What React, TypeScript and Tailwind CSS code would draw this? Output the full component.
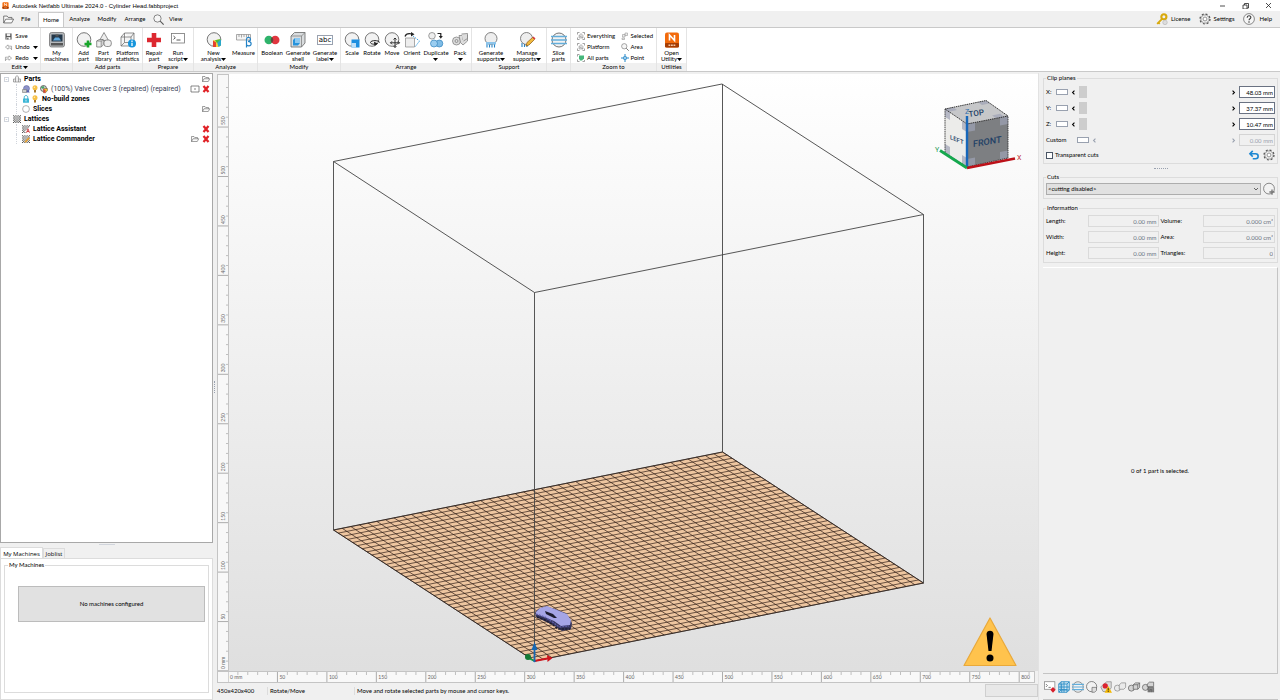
import type { ReactNode } from "react";

type IconProps = { name: string; className?: string };

const circle = <circle cx="8" cy="7.5" r="6.8" fill="#f2f2f2" stroke="#555" strokeWidth="0.8" />;

const glyphs: Record<string, ReactNode> = {
  app: (
    <>
      <rect x="1" y="0.5" width="14" height="15" rx="2" fill="#f26a0c" />
      <rect x="1" y="11" width="14" height="4.5" rx="1" fill="#a53d05" />
      <path d="M5.500 8.500V3L10.500 8.500V3" fill="none" stroke="#fff" strokeWidth="1.600" />
      <path d="M4.500 13.200h7" stroke="#f4c7a6" strokeWidth="1.400" strokeDasharray="1.800 0.700" />
    </>
  ),
  folder: (
    <path d="M1 13V3h5l1.500 2H13v2.500M1 13l3-5.500h11.500L12.500 13z" fill="#fafafa" stroke="#555" strokeWidth="1.100" />
  ),
  search: (
    <>
      <circle cx="6.500" cy="6.500" r="5.300" fill="#f6f6f6" stroke="#555" strokeWidth="1" />
      <path d="M10.500 10.500L15.500 15.500" stroke="#555" strokeWidth="1.600" />
    </>
  ),
  key: (
    <>
      <circle cx="10.500" cy="5" r="3.400" fill="none" stroke="#d8a90c" strokeWidth="2.800" />
      <path d="M8.500 7.500L1.500 14.500M3 12.500l2 2" stroke="#d8a90c" strokeWidth="2.400" />
      <circle cx="12" cy="12.500" r="3" fill="#ddd" stroke="#aaa" strokeWidth="0.700" />
    </>
  ),
  gear: (
    <>
      <circle cx="8" cy="8" r="6.600" fill="none" stroke="#555" strokeWidth="1.800" strokeDasharray="2.600 2.580" />
      <circle cx="8" cy="8" r="5.500" fill="#f0f0f0" stroke="#666" strokeWidth="0.800" />
      <circle cx="8" cy="8" r="2.600" fill="#fff" stroke="#666" strokeWidth="0.900" />
    </>
  ),
  help: (
    <>
      <circle cx="8" cy="8" r="7.200" fill="#f6f6f6" stroke="#555" strokeWidth="0.900" />
      <path d="M5.500 6.200c0-3.400 5-3.200 5-.4 0 1.900-2.500 1.900-2.500 4" fill="none" stroke="#333" strokeWidth="1.400" />
      <circle cx="8" cy="12" r="1" fill="#333" />
    </>
  ),
  save: (
    <>
      <path d="M1 1h14v14H1z" fill="#555" />
      <path d="M4 1h8v6H4z" fill="#eee" />
      <path d="M3.500 9.500h9V15h-9z" fill="#fff" />
      <path d="M5 11h3v4H5z" fill="#555" />
    </>
  ),
  undo: <path d="M7 2L1 7l6 5V9h5.500l2.500 4V5H7z" fill="#fff" stroke="#777" strokeWidth="1.300" />,
  redo: <path d="M9 2l6 5-6 5V9H3.500L1 13V5h8z" fill="#fff" stroke="#777" strokeWidth="1.300" />,
  machine: (
    <>
      <rect x="0.500" y="0.500" width="15" height="14.500" rx="2" fill="#b5b8bb" stroke="#666" strokeWidth="0.700" />
      <path d="M2.500 2.500h11v7h-11z" fill="#24384a" />
      <path d="M4 8.500l2-3h4l2 3z" fill="#60a8dd" />
      <path d="M6.500 2.500h3v2h-3zM2 11h12v2.500H2z" fill="#555" />
    </>
  ),
  addPart: (
    <>
      {circle}
      <path d="M12 8.500v7M8.500 12h7" stroke="#17a62a" strokeWidth="2.600" />
    </>
  ),
  library: (
    <g fill="#eee" stroke="#666" strokeWidth="0.700">
      <path d="M8 0.500L12.500 8.500H3.500z" />
      <path d="M0.700 9l2.500-1.500h4V13l-2 2H0.700z" />
      <path d="M0.700 9h4.500v6M5.200 9l2-1.500" />
      <rect x="8" y="8" width="7.300" height="6.500" rx="2.500" />
    </g>
  ),
  stats: (
    <>
      <path d="M1 5l3.500-4H14v9l-3 4H1zM1 5h10v9M11 5l3-4M4.500 1v9.500H14M4.500 10.500L1 14" fill="#f4f4f4" stroke="#666" strokeWidth="0.700" />
      <circle cx="12" cy="11.500" r="4" fill="#1695dc" />
      <path d="M12 8.500v1.500M12 10.800v3.200" stroke="#fff" strokeWidth="1.300" />
    </>
  ),
  repair: <path d="M8 1v14M1 8h14" stroke="#dc2830" strokeWidth="4.600" />,
  script: (
    <>
      <rect x="1.500" y="1.500" width="13" height="9.500" fill="#fff" stroke="#777" strokeWidth="0.800" />
      <path d="M3.500 4l1.800 1.700-1.800 1.700M6.500 8h4" fill="none" stroke="#444" strokeWidth="0.900" />
    </>
  ),
  analysis: (
    <>
      {circle}
      <path d="M7 15V8.500L15 7v6.500L12.500 15z" fill="#f4d13a" />
      <path d="M7 15V8.500l3 2v4.500z" fill="#e5412d" />
      <path d="M15 7v6.500L12.500 15 11 10z" fill="#2aa7c9" />
      <path d="M9 8.200L15 7l-4 4z" fill="#4abb3c" />
    </>
  ),
  measure: (
    <>
      <path d="M0.500 2.500h14v5.500H0.500zM3 2.500V5M5.500 2.500v3M8 2.500V5M10.500 2.500v3M12.500 2.500V5" fill="#f4f4f4" stroke="#888" strokeWidth="0.700" />
      <path d="M10.500 15.500V7.500c0-3 4-2.500 4-.2 0 1.500-1.500 2-2.500 2 4 0 4 4.500 1 4.500-1 0-2-.5-2.500-1" fill="none" stroke="#2583c6" strokeWidth="1.200" />
    </>
  ),
  boolean: (
    <>
      <circle cx="4.800" cy="8" r="4.300" fill="#2fb36b" />
      <circle cx="11.200" cy="8" r="4.300" fill="#e0363f" />
      <path d="M8 5.100a4.300 4.300 0 0 1 0 5.800 4.300 4.300 0 0 1 0-5.800z" fill="#5b4a3a" />
    </>
  ),
  shell: (
    <>
      <path d="M1 4l3.500-3.500H15v10.500L11.500 15H1z" fill="#d9dcde" stroke="#666" strokeWidth="0.800" />
      <path d="M1 4h10.500v11M11.500 4L15 .5" fill="none" stroke="#777" strokeWidth="0.700" />
      <path d="M3 13.500V8l2-2h5v5l-2 2.500z" fill="#2793dc" />
      <path d="M5 6h5v5H5z" fill="#8cc8f0" />
    </>
  ),
  rotate: (
    <>
      {circle}
      <path d="M15.500 10.500c0-2.500-9-2.500-9 0 0 1.500 3 2 6 1.500" fill="none" stroke="#222" strokeWidth="1" />
      <path d="M10 9.800l4 1.700-3.500 2.500z" fill="#222" />
    </>
  ),
  scale: (
    <>
      {circle}
      <path d="M7.500 7.500h8v8h-8z" fill="#1d8fe0" />
      <path d="M7.500 11h4.500v4.500H7.500z" fill="#bfe0f8" />
    </>
  ),
  move: (
    <>
      {circle}
      <path d="M11 6v9.500M6.500 10.800h9M9.500 7.500L11 6l1.500 1.500M9.500 14l1.500 1.500 1.500-1.500M8 9.300l-1.500 1.500L8 12.300M14 9.300l1.500 1.500-1.500 1.500" fill="none" stroke="#222" strokeWidth="0.900" />
    </>
  ),
  orient: (
    <>
      <path d="M1.500 6h9v9h-9z" fill="#eee" stroke="#888" strokeWidth="0.700" />
      <path d="M9 4l6.500 5L11 15" fill="none" stroke="#2a95dd" strokeWidth="0.900" strokeDasharray="1.500 1" />
      <path d="M1 4.500C2 1.500 5 1.300 8 2" fill="none" stroke="#222" strokeWidth="1.200" />
      <path d="M7 0l3.500 2.300L7 4.500z" fill="#222" />
    </>
  ),
  duplicate: (
    <>
      <circle cx="4" cy="3.800" r="3.300" fill="#eee" stroke="#777" strokeWidth="0.700" />
      <circle cx="11.300" cy="11.500" r="3.500" fill="#7fbce6" stroke="#2f82bd" strokeWidth="0.700" />
      <circle cx="6" cy="11.500" r="3.500" fill="#9acdf0" stroke="#2f82bd" strokeWidth="0.700" />
      <path d="M9.500 1.500h3.300v3" fill="none" stroke="#222" strokeWidth="1.200" />
      <path d="M10.800 4h4l-2 2.800z" fill="#222" />
    </>
  ),
  pack: (
    <g fill="#ddd" stroke="#777" strokeWidth="0.700">
      <circle cx="4.500" cy="9" r="4" />
      <circle cx="4.500" cy="9" r="1.500" />
      <path d="M7 3.500h4v4l4.500-4.500v6L11 13l-2.500-2.500z" />
      <path d="M9.500 2l6-.5v5l-4 2.500" />
    </g>
  ),
  supports: (
    <>
      <path d="M4 12v3.500M6.500 12v3.500M9 12v3.500M11.500 12v3.500" stroke="#2583c6" strokeWidth="1.100" />
      <circle cx="8" cy="6.500" r="6" fill="#eee" stroke="#666" strokeWidth="0.800" />
      <path d="M3 10h10v2.500H3z" fill="#8cc4ea" />
    </>
  ),
  manage: (
    <>
      <path d="M3 11v4M5.500 11v4M8 12v3" stroke="#2583c6" strokeWidth="1.100" />
      <circle cx="7.500" cy="6.500" r="6" fill="#eee" stroke="#666" strokeWidth="0.800" />
      <path d="M7 14l1-3.500 5.500-5 2 2-5.500 5.500z" fill="#f1b83c" stroke="#8a5a17" strokeWidth="0.700" />
      <path d="M13.500 5.500l1-1 2 2-1 1z" fill="#e0363f" />
    </>
  ),
  slice: (
    <>
      <circle cx="8" cy="8" r="7" fill="#f2f2f2" stroke="#555" strokeWidth="0.800" />
      <path d="M0 4.500h16M0 8h16M0 11.500h16" stroke="#63aedb" strokeWidth="1.500" />
    </>
  ),
  everything: (
    <>
      <path d="M1 5V1h4M11 1h4v4M15 11v4h-4M5 15H1v-4" fill="none" stroke="#666" strokeWidth="1.200" />
      <path d="M4 7l4-4 4 4v5H4zM4 7l8 5" fill="#ddd" stroke="#888" strokeWidth="1" />
    </>
  ),
  allParts: (
    <>
      <path d="M1 5V1h4M1 11v4h4M11 15h4v-3" fill="none" stroke="#666" strokeWidth="1.200" />
      <path d="M4 3h10v6l-4 4H6l-2-4z" fill="#46b77c" />
    </>
  ),
  selected: <path d="M3 5h5v5H3zM8 2h5v5H8zM2 12h5v3H2z" fill="#eee" stroke="#999" strokeWidth="1.200" />,
  point: <path d="M8 0v5M8 11v5M0 8h5M11 8h5M5.500 5.500h5v5h-5z" fill="#fff" stroke="#2387c9" strokeWidth="2" />,
  part: <path d="M1 14V8h4V4l3-3 3 3v4h4v6zM5 8v6M11 8v6" fill="#eee" stroke="#777" strokeWidth="1.200" />,
  globePart: (
    <>
      <circle cx="9" cy="7" r="6" fill="#8d92c9" stroke="#555a90" strokeWidth="1" />
      <path d="M1 9h8v6H1z" fill="#ccc" stroke="#666" strokeWidth="1" />
      <path d="M12 9l3.500 6h-7z" fill="#555fae" />
    </>
  ),
  bulb: (
    <>
      <circle cx="8" cy="5.500" r="5" fill="#f7c044" />
      <path d="M6 10h4v5H6z" fill="#a97a2a" />
      <circle cx="6.800" cy="4.500" r="1.600" fill="#fdeab5" />
    </>
  ),
  meshPart: (
    <>
      <circle cx="7" cy="7" r="6" fill="#ddd" stroke="#333" strokeWidth="1.400" />
      <path d="M7 7h8v4l-4 4.500H7z" fill="#f2bd30" stroke="#333" strokeWidth="0.800" />
      <path d="M7 7l4 4v4.500H7z" fill="#d8443d" />
      <path d="M2 4l5-2 2 3-5 3z" fill="#44a564" />
    </>
  ),
  lock: (
    <>
      <path d="M4.500 8V4.500c0-4.500 7-4.500 7 0V8" fill="none" stroke="#2aa3c4" strokeWidth="1.800" />
      <rect x="2" y="7" width="12" height="8.500" rx="1" fill="#3bb6d6" />
      <path d="M8 9.500v3.500" stroke="#fff" strokeWidth="1.600" />
    </>
  ),
  ring: <circle cx="8" cy="8" r="6.800" fill="#fff" stroke="#888" strokeWidth="1.300" />,
  lattice: (
    <g stroke="#555" strokeWidth="2.200" strokeDasharray="2.300 2.300">
      <path d="M0 1.500h16M0 6h16M0 10.500h16M0 15h16" />
      <path d="M2.300 3.700h13.500M2.300 8.200h13.500M2.300 12.700h13.500" />
    </g>
  ),
  latticeA: (
    <>
      <g stroke="#555" strokeWidth="2.200" strokeDasharray="2.300 2.300">
        <path d="M0 1.500h16M0 6h13M0 10.500h7M0 15h7" />
        <path d="M2.300 3.700h13.500M2.300 8.200h7M2.300 12.700h4" />
      </g>
      <path d="M9 15.500l3-8 3 8M10 13h4" fill="none" stroke="#c8262d" strokeWidth="1.600" />
    </>
  ),
  latticeC: (
    <>
      <g stroke="#555" strokeWidth="2.200" strokeDasharray="2.300 2.300">
        <path d="M0 1.500h16M0 6h16M0 10.500h16M0 15h16" />
        <path d="M2.300 3.700h13.500M2.300 8.200h13.500M2.300 12.700h13.500" />
      </g>
      <path d="M5 13.500l8-9 2.500 2-8 9z" fill="#e8a12c" />
    </>
  ),
  remove: <path d="M3 2l10 12M13 2L3 14" stroke="#e02227" strokeWidth="4.500" />,
  screen: (
    <>
      <path d="M0 2h16v12H0z" fill="#fff" stroke="#555" strokeWidth="1.400" />
      <path d="M8 6v4" stroke="#555" strokeWidth="1.500" />
    </>
  ),
  back: <path d="M6 1.500L1.500 6 6 10.500M2 6h8.500c5.500 0 5.500 8 0 8H6" fill="none" stroke="#1e88d2" strokeWidth="2.600" />,
  addCut: (
    <>
      <circle cx="8" cy="7.500" r="7.200" fill="#f2f2f2" stroke="#555" strokeWidth="0.900" />
      <path d="M12 8.500v7M8.500 12h7" stroke="#777" strokeWidth="1.800" />
    </>
  ),
  scriptStop: (
    <>
      <rect x="0.500" y="1" width="14" height="10" fill="#fff" stroke="#777" strokeWidth="0.900" />
      <path d="M2.500 4l2 2-2 2M6 8.500h3" fill="none" stroke="#444" strokeWidth="0.900" />
      <path d="M12 8l3.500 3.800L12 15.500l-3.500-3.700z" fill="#d61f2c" />
    </>
  ),
  grid: (
    <path d="M1 4l3-3h11v11l-3 3H1zM1 4h11v11M4 1v11h11M12 4l3-3M1 8h14M8 1v14M4 12l-3 3M1 11.500h11M5 4v11" fill="#d7ecf8" stroke="#2b8cc4" strokeWidth="1.200" />
  ),
  roundPart: (
    <>
      <circle cx="7.500" cy="7.500" r="6.800" fill="#f2f2f2" stroke="#555" strokeWidth="0.900" />
      <path d="M8 8.500h6v4l-2.500 2.500H8z" fill="#ddd" stroke="#555" strokeWidth="0.800" />
    </>
  ),
  warnPart: (
    <>
      <path d="M1 8l4-4 4-3h6v8l-4 5H4z" fill="#ddd" stroke="#777" strokeWidth="0.800" />
      <circle cx="7" cy="6.500" r="3.500" fill="#dc2430" />
      <path d="M11 6.500l5 9H6z" fill="#f5b800" />
      <path d="M11 9.500v3M11 13.200v1.300" stroke="#222" strokeWidth="1.200" />
    </>
  ),
  pair: (
    <g fill="#eaeaea" stroke="#777" strokeWidth="0.800">
      <circle cx="4.500" cy="9.500" r="4" />
      <path d="M7 5l3-2.500h5.500v6L13 11H7z" />
    </g>
  ),
  pairDark: (
    <g fill="#d4d4d4" stroke="#555" strokeWidth="0.900">
      <circle cx="4.500" cy="9.500" r="4" />
      <path d="M7 5l3-2.500h5.500v6L13 11H7zM7 5h6v6M13 5l2.500-2.500" />
    </g>
  ),
  pairMachine: (
    <g fill="#d4d4d4" stroke="#555" strokeWidth="0.900">
      <circle cx="4.500" cy="8.500" r="4" />
      <path d="M7 4l3-2.500h5.500v6H7z" />
      <path d="M8 15V8.500h7.500V15M10.500 15v-3.500H13V15" fill="#888" />
    </g>
  ),
  less: <path d="M11 2L5 8l6 6" fill="none" stroke="currentColor" strokeWidth="3.500" />,
  greater: <path d="M5 2l6 6-6 6" fill="none" stroke="currentColor" strokeWidth="3.500" />,
};

function Icon({ name, className = "size-4" }: IconProps) {
  return (
    <svg viewBox="0 0 16 16" className={`shrink-0 overflow-visible ${className}`} aria-hidden="true">
      {glyphs[name]}
    </svg>
  );
}

function Caret() {
  return (
    <svg viewBox="0 0 5 3" className="inline-block h-[3px] w-[5px] align-middle" aria-hidden="true">
      <path d="M0 0h5L2.500 3z" />
    </svg>
  );
}

type Tool = { icon: string; lines: string[]; width: string; menu?: "inline" | "below" };

const ribbon: { title: string; width: string; tools: Tool[] }[] = [
  { title: "", width: "w-8", tools: [{ icon: "machine", lines: ["My", "machines"], width: "w-7" }] },
  {
    title: "Add parts",
    width: "w-[70px]",
    tools: [
      { icon: "addPart", lines: ["Add", "part"], width: "w-5" },
      { icon: "library", lines: ["Part", "library"], width: "w-5" },
      { icon: "stats", lines: ["Platform", "statistics"], width: "w-7" },
    ],
  },
  {
    title: "Prepare",
    width: "w-[51px]",
    tools: [
      { icon: "repair", lines: ["Repair", "part"], width: "w-5" },
      { icon: "script", lines: ["Run", "script"], width: "w-7", menu: "inline" },
    ],
  },
  {
    title: "Analyze",
    width: "w-16",
    tools: [
      { icon: "analysis", lines: ["New", "analysis"], width: "w-9", menu: "inline" },
      { icon: "measure", lines: ["Measure"], width: "w-6" },
    ],
  },
  {
    title: "Modify",
    width: "w-[83px]",
    tools: [
      { icon: "boolean", lines: ["Boolean"], width: "w-[26px]" },
      { icon: "shell", lines: ["Generate", "shell"], width: "w-[26px]" },
      { icon: "abc", lines: ["Generate", "label"], width: "w-7", menu: "inline" },
    ],
  },
  {
    title: "Arrange",
    width: "w-[131px]",
    tools: [
      { icon: "scale", lines: ["Scale"], width: "w-5" },
      { icon: "rotate", lines: ["Rotate"], width: "w-5" },
      { icon: "move", lines: ["Move"], width: "w-5" },
      { icon: "orient", lines: ["Orient"], width: "w-5" },
      { icon: "duplicate", lines: ["Duplicate"], width: "w-7", menu: "below" },
      { icon: "pack", lines: ["Pack"], width: "w-5", menu: "below" },
    ],
  },
  {
    title: "Support",
    width: "w-[75px]",
    tools: [
      { icon: "supports", lines: ["Generate", "supports"], width: "w-9", menu: "inline" },
      { icon: "manage", lines: ["Manage", "supports"], width: "w-9", menu: "inline" },
    ],
  },
  { title: "", width: "w-6", tools: [{ icon: "slice", lines: ["Slice", "parts"], width: "w-5" }] },
];

function ToolButton({ tool }: { tool: Tool }) {
  return (
    <button type="button" className={`flex flex-col items-center ${tool.width}`}>
      {tool.icon === "abc" ? (
        <span className="my-[3px] flex h-[10px] w-4 items-center justify-center border border-gray-400 font-['DejaVu_Sans'] text-[7px] leading-none">
          abc
        </span>
      ) : (
        <Icon name={tool.icon} />
      )}
      <span className="mt-[2px] whitespace-nowrap text-center leading-[6px]">
        {tool.lines.map((line, i) => (
          <span key={line} className="block">
            {line}
            {tool.menu === "inline" && i === tool.lines.length - 1 && <Caret />}
          </span>
        ))}
        {tool.menu === "below" && (
          <span className="block">
            <Caret />
          </span>
        )}
      </span>
    </button>
  );
}

function RibbonGroup({ title, width, children }: { title: ReactNode; width: string; children: ReactNode }) {
  return (
    <div className={`flex shrink-0 flex-col border-r border-[#e4e4e4] ${width}`}>
      <div className="flex flex-1 justify-center pt-1">{children}</div>
      <div className="flex h-2 items-center justify-center whitespace-nowrap bg-[#f0f0f0]">{title}</div>
    </div>
  );
}

function Ribbon() {
  return (
    <div className="flex h-[45px] shrink-0 border-y border-[#c9c9c9] bg-white">
      <RibbonGroup width="w-[41px]" title={<button type="button">Edit <Caret /></button>}>
        <div className="flex flex-1 flex-col gap-[3px] pl-[7px]">
          {["Save", "Undo", "Redo"].map((label) => (
            <button key={label} type="button" className="flex h-2 items-center gap-[3px]">
              <Icon name={label.toLowerCase()} className="size-[7px]" />
              {label}
              {label !== "Save" && (
                <span className="ml-auto mr-1 flex">
                  <Caret />
                </span>
              )}
            </button>
          ))}
        </div>
      </RibbonGroup>
      {ribbon.map((group, i) => (
        <RibbonGroup key={i} width={group.width} title={group.title}>
          {group.tools.map((tool) => (
            <ToolButton key={tool.icon} tool={tool} />
          ))}
        </RibbonGroup>
      ))}
      <RibbonGroup width="w-[86px]" title="Zoom to">
        <div className="grid flex-1 grid-cols-2 content-start gap-y-[3px] pl-[6px]">
          {[
            ["everything", "Everything"],
            ["selected", "Selected"],
            ["everything", "Platform"],
            ["search", "Area"],
            ["allParts", "All parts"],
            ["point", "Point"],
          ].map(([icon, label]) => (
            <button key={label} type="button" className="flex h-2 items-center gap-[2px] even:pl-1">
              <Icon name={icon} className="size-2" />
              {label}
            </button>
          ))}
        </div>
      </RibbonGroup>
      <RibbonGroup width="w-[30px]" title="Utilities">
        <ToolButton tool={{ icon: "app", lines: ["Open", "Utility"], width: "w-7", menu: "inline" }} />
      </RibbonGroup>
    </div>
  );
}

function TitleBar() {
  return (
    <header className="flex h-[11px] shrink-0 items-center bg-white pl-[2px] pr-2">
      <Icon name="app" className="size-[7px]" />
      <h1 className="ml-[3px] font-['Liberation_Sans',sans-serif] text-[6px]">
        Autodesk Netfabb Ultimate 2024.0 - Cylinder Head.fabbproject
      </h1>
      <div className="ml-auto flex gap-4">
        {[
          ["Minimize", "M1 4h5"],
          ["Restore", "M1 3h4v4H1zM2.500 3V1.500h4V6H5"],
          ["Close", "M1 1l5 5M6 1L1 6"],
        ].map(([label, d]) => (
          <button key={label} type="button" aria-label={label}>
            <svg viewBox="0 0 7 7" className="size-[7px]">
              <path d={d} fill="none" stroke="#222" strokeWidth="0.800" />
            </svg>
          </button>
        ))}
      </div>
    </header>
  );
}

function TabBar() {
  return (
    <nav className="flex h-4 shrink-0 items-center bg-[#f0f0f0] pl-[3px] pr-2">
      <button type="button" aria-label="Open project">
        <Icon name="folder" className="size-[11px]" />
      </button>
      <button type="button" className="ml-[7px] w-[17px] text-left">File</button>
      <button type="button" className="-mb-px flex h-full w-[26px] items-center justify-center border border-b-0 border-[#c9c9c9] bg-white">
        Home
      </button>
      <button type="button" className="w-[31px]">Analyze</button>
      <button type="button" className="w-6">Modify</button>
      <button type="button" className="w-8">Arrange</button>
      <button type="button" aria-label="Search" className="ml-[2px]">
        <Icon name="search" className="size-[11px]" />
      </button>
      <button type="button" className="ml-[5px]">View</button>
      <div className="ml-auto flex items-center">
        <button type="button" className="flex items-center gap-[3px]">
          <Icon name="key" className="size-3" />
          License
        </button>
        <button type="button" className="ml-2 flex items-center gap-[3px]">
          <Icon name="gear" className="size-3" />
          Settings
        </button>
        <button type="button" className="ml-2 flex items-center gap-[5px]">
          <Icon name="help" className="size-3" />
          Help
        </button>
      </div>
    </nav>
  );
}

type Row = { depth: number; icons: string[]; label: string; plain?: boolean; actions?: string[] };

const rows: Row[] = [
  { depth: 0, icons: ["part"], label: "Parts", actions: ["folder"] },
  {
    depth: 1,
    icons: ["globePart", "bulb", "meshPart"],
    label: "(100%) Valve Cover 3 (repaired) (repaired)",
    plain: true,
    actions: ["screen", "remove"],
  },
  { depth: 1, icons: ["lock", "bulb"], label: "No-build zones" },
  { depth: 1, icons: ["ring"], label: "Slices", actions: ["folder"] },
  { depth: 0, icons: ["lattice"], label: "Lattices" },
  { depth: 1, icons: ["latticeA"], label: "Lattice Assistant", actions: ["remove"] },
  { depth: 1, icons: ["latticeC"], label: "Lattice Commander", actions: ["folder", "remove"] },
];

function PartTree() {
  return (
    <ul className="flex-1 border border-[#a8a8a8] bg-white font-[Roboto,sans-serif] text-[7px]">
      {rows.map((row) => (
        <li key={row.label} className="flex h-[10px] items-center pl-[3px] pr-[2px]">
          {row.depth === 0 ? (
            <span className="mr-1 flex size-[5px] items-center justify-center border border-gray-300 text-[5px] leading-none text-gray-500">
              -
            </span>
          ) : (
            <span className="ml-3 mr-[2px] h-full w-1 border-l border-dotted border-gray-300" />
          )}
          <span className="flex gap-px">
            {row.icons.map((icon) => (
              <Icon key={icon} name={icon} className="size-2" />
            ))}
          </span>
          <span className={`ml-[3px] whitespace-nowrap ${row.plain ? "text-gray-700" : "font-bold"}`}>{row.label}</span>
          <span className="ml-auto flex gap-[3px]">
            {row.actions?.map((icon) => (
              <button key={icon} type="button" aria-label={`${icon} ${row.label}`}>
                <Icon name={icon} className="size-2" />
              </button>
            ))}
          </span>
        </li>
      ))}
    </ul>
  );
}

function Sidebar() {
  return (
    <aside className="flex w-[213px] shrink-0 flex-col">
      <PartTree />
      <div className="mx-auto my-px h-px w-4 bg-gray-300" />
      <div className="flex h-3 items-end font-['Open_Sans','Noto_Sans',sans-serif]">
        <button type="button" className="-mb-px h-3 w-[43px] border border-b-0 border-[#dcdcdc] bg-white">
          My Machines
        </button>
        <button type="button" className="h-[10px] w-[22px] border border-b-0 border-[#dcdcdc]">
          Joblist
        </button>
      </div>
      <div className="h-[142px] border border-[#dcdcdc] bg-white px-[3px] pb-[6px] pt-[2px]">
        <fieldset className="h-full border border-[#dcdcdc] px-[3px]">
          <legend className="px-px leading-[8px]">My Machines</legend>
          <button
            type="button"
            className="ml-[10px] mt-[17px] block h-9 w-[187px] border border-[#bcbcbc] bg-[#e1e1e1]"
          >
            No machines configured
          </button>
        </fieldset>
      </div>
    </aside>
  );
}

// ruler scale: 50 mm per major division, 49.45px apart
const MAJOR = 49.45;
const divisions = Array.from({ length: 17 }, (_, i) => i);

function VerticalRuler() {
  return (
    <svg className="h-full w-3 shrink-0 border border-[#c4c4c4] bg-[#f8f8f8]">
      <svg y="100%" overflow="visible">
        {divisions.slice(0, 12).map((n) => (
          <g key={n} stroke="#b0b0b0" strokeWidth="0.800" transform={`translate(0 ${1 - n * MAJOR})`}>
            <path d="M0 0h11" stroke="#999" />
            {[1, 2, 3, 4].map((k) => (
              <path key={k} d={`M8 ${(-k * MAJOR) / 5}h3`} />
            ))}
            <text transform="translate(7 -2) rotate(-90)" fontSize="5" fill="#666" stroke="none">
              {n === 0 ? "0 mm" : n * 50}
            </text>
          </g>
        ))}
      </svg>
    </svg>
  );
}

function HorizontalRuler() {
  return (
    <div className="mr-[3px] flex h-3 shrink-0 border border-[#c4c4c4] bg-[#f8f8f8]">
      <svg className="ml-[10px] h-full w-full">
        {divisions.map((n) => (
          <g key={n} stroke="#b0b0b0" strokeWidth="0.800" transform={`translate(${n * MAJOR} 0)`}>
            <path d="M0 0v11" stroke="#999" />
            {[1, 2, 3, 4].map((k) => (
              <path key={k} d={`M${(k * MAJOR) / 5} 0v3`} />
            ))}
            <text x="2" y="7" fontSize="5" fill="#666" stroke="none">
              {n === 0 ? "0 mm" : n * 50}
            </text>
          </g>
        ))}
      </svg>
    </div>
  );
}

const COLS = 45;
const ROWS = 42;

function BuildPlate() {
  // plate corners: front (534.5,661), right (923.5,583), left (333.5,530)
  const along = Array.from({ length: COLS + 1 }, (_, i) => {
    const t = i / COLS;
    return `M${534.5 + 389 * t} ${661 - 78 * t}l-201 -131`;
  });
  const across = Array.from({ length: ROWS + 1 }, (_, i) => {
    const t = i / ROWS;
    return `M${534.5 - 201 * t} ${661 - 131 * t}l389 -78`;
  });
  return (
    <svg viewBox="229 74 809 597" className="absolute inset-0 h-full w-full" role="img" aria-label="Build volume">
      <g fill="none" stroke="#444" strokeWidth="0.900">
        <path d="M333.500 161.500L722 84L923.500 214.500M722.500 84V452.500" />
        <path d="M534.500 661L923.500 583L722.500 452L333.500 530z" fill="#eec6a0" />
        <path d={along.join("")} stroke="#2e1c16" strokeWidth="0.700" />
        <path d={across.join("")} stroke="#2e1c16" strokeWidth="0.700" />
        <path d="M333.500 161.500L534.500 292.500L923.500 214.500V583M333.500 161.500V530M534.500 292.500V661" />
      </g>
      <g>
        <path d="M535 613l3-4 8-3 20 7 6 10-1 6-9 2-7-5-19-9z" fill="#35355c" />
        <path d="M536 612l4-4 7-2 20 8 4 6-1 5-9 1-7-5-18-7z" fill="#a5a5e6" />
        <path d="M545 611l8 3 4 4-3 0-8-4z" fill="#1d1d30" />
        <path d="M536 614l9 3 9 6 5 4 10-1" fill="none" stroke="#5e5ea8" strokeWidth="1.300" strokeDasharray="2 1" />
        <path d="M537 617l8 3 8 5 5 4h12" fill="none" stroke="#1d1d30" strokeWidth="1.500" strokeDasharray="2.500 1" />
      </g>
      <path d="M534.500 661v-14" stroke="#1668b4" strokeWidth="1.800" />
      <path d="M531.500 650l3-8 3 8z" fill="#1668b4" />
      <path d="M534.500 661l13-2.500" stroke="#d0141c" strokeWidth="1.800" />
      <path d="M547 655l5.500 3-5 4z" fill="#d0141c" />
      <path d="M534.500 661l-6-3" stroke="#1e9c47" strokeWidth="1.800" />
      <circle cx="528" cy="657" r="3" fill="#137a34" />
      <circle cx="534.500" cy="661" r="1.200" fill="#1668b4" />
    </svg>
  );
}

function ViewCube() {
  return (
    <svg viewBox="932 96 92 76" className="absolute right-[14px] top-[22px] h-[76px] w-[92px]" role="img" aria-label="View cube">
      <path d="M945 109L986 100.500L1008 116L967 124z" fill="#c6c7c9" />
      <path d="M945 109L967 124V167L945 153z" fill="#ececea" />
      <path d="M967 124L1008 116V158L967 167z" fill="#7d7f82" />
      <g fill="#9fa3b6" opacity="0.700">
        <path d="M945 109l5 3v8l-5-3zM962 121l5 3v8l-5-3zM945 144l5 3v9l-5-3zM962 155l5 3v9l-5-3z" />
        <path d="M967 124l8-1.500v8l-8 1.500zM1000 117.500l8-1.500v8l-8 1.500zM967 159l8-1.500v8l-8 1.500zM1000 152l8-1.500v8l-8 1.500z" />
        <path d="M945 109l8-1.700 4 2.700-8 1.700zM978 102.200l8-1.700 4 2.700-8 1.700zM996 118.200l8-1.700-4-2.800-8 1.700z" />
      </g>
      <path d="M945 109L986 100.500L1008 116L967 124z" fill="none" stroke="#222" strokeWidth="0.900" strokeDasharray="1.500 0.700" />
      <path d="M945 109V153L967 167L1008 158V116" fill="none" stroke="#333" strokeWidth="0.900" strokeDasharray="1.500 0.700" />
      <g fill="#1f3f66" fontFamily="Roboto, sans-serif" fontWeight="500">
        <text transform="translate(973 147) skewY(-9)" fontSize="9">FRONT</text>
        <text transform="translate(950 139) skewY(22)" fontSize="6">LEFT</text>
        <text transform="translate(969 117) rotate(-8)" fontSize="8">TOP</text>
      </g>
      <path d="M967 167V116" stroke="#1767ba" strokeWidth="2.400" />
      <path d="M967 168L940 150.500" stroke="#15a84e" strokeWidth="2.800" />
      <path d="M967 168L1015 158.500" stroke="#bc1119" strokeWidth="2.800" />
      <g fontFamily="Roboto, sans-serif" fontSize="7">
        <text x="1017" y="160" fill="#c0282e">X</text>
        <text x="935" y="152" fill="#279a55">Y</text>
        <text x="965" y="114" fill="#2c6cad">Z</text>
      </g>
    </svg>
  );
}

function Viewport() {
  return (
    <main className="flex min-w-0 flex-1 flex-col pt-px">
      <div className="flex min-h-0 flex-1">
        <VerticalRuler />
        <div className="relative min-w-0 flex-1 bg-linear-to-b from-white to-[#dfdfdf]">
          <BuildPlate />
          <ViewCube />
          <svg viewBox="0 0 54 50" className="absolute bottom-1 right-[21px] h-[50px] w-[54px]" role="img" aria-label="Warning">
            <path d="M27 1L53 48.500H1z" fill="#ffc34d" stroke="#e9a93a" strokeWidth="1.200" strokeLinejoin="round" />
            <path d="M23.500 17c0-4.500 7-4.500 7 0l-2 17h-3z" fill="#000" />
            <circle cx="27" cy="41" r="3.500" fill="#000" />
          </svg>
        </div>
      </div>
      <HorizontalRuler />
      <footer className="flex h-[17px] shrink-0 items-center pb-[2px]">
        <span className="w-[50px]">450x420x400</span>
        <span className="w-[87px] border-l border-[#dcdcdc] pl-[2px]">Rotate/Move</span>
        <span className="flex-1 border-l border-[#dcdcdc] pl-[2px]">
          Move and rotate selected parts by mouse and cursor keys.
        </span>
        <span className="h-[13px] w-[53px] border border-[#cfcfcf] bg-[#e8e8e8]" />
      </footer>
    </main>
  );
}

const fieldClass = "min-w-0 border px-px text-right";

function ClipRow({ label, value, disabled }: { label: string; value: string; disabled?: boolean }) {
  const tone = disabled ? "text-gray-400" : "text-black";
  const id = `clip-${label}`;
  return (
    <div className="flex h-4 items-center">
      <label htmlFor={id} className={disabled ? "w-[31px]" : "w-[10px]"}>
        {disabled ? label : `${label}:`}
      </label>
      <button type="button" aria-label={`${label} colour`} className="h-[6px] w-3 shrink-0 border border-gray-400 bg-white" />
      <button type="button" aria-label={`${label} down`} className={`flex w-[11px] shrink-0 justify-center ${tone}`}>
        <Icon name="less" className="size-[5px]" />
      </button>
      {disabled ? (
        <span className="flex-1" />
      ) : (
        <input
          type="range"
          aria-label={`${label} position`}
          defaultValue={0}
          className="h-3 min-w-0 flex-1 appearance-none bg-transparent [&::-webkit-slider-thumb]:h-3 [&::-webkit-slider-thumb]:w-2 [&::-webkit-slider-thumb]:appearance-none [&::-webkit-slider-thumb]:bg-[#cdcdcd]"
        />
      )}
      <button type="button" aria-label={`${label} up`} className={`flex w-3 shrink-0 justify-center ${tone}`}>
        <Icon name="greater" className="size-[5px]" />
      </button>
      <input
        id={id}
        defaultValue={value}
        disabled={disabled}
        className={`${fieldClass} h-3 w-9 ${disabled ? "border-[#d4d4d4] text-gray-400" : "border-gray-500 bg-white"}`}
      />
    </div>
  );
}

function InfoField({ label, value, wide }: { label: string; value: string; wide?: boolean }) {
  return (
    <>
      <label htmlFor={`info-${label}`}>{label}:</label>
      <input
        id={`info-${label}`}
        readOnly
        value={value}
        className={`${fieldClass} h-3 border-[#dadada] text-gray-500 ${wide ? "mr-0" : "mr-[2px]"}`}
      />
    </>
  );
}

const footerIcons = ["scriptStop", "grid", "slice", "roundPart", "warnPart", "pair", "pairDark", "pairMachine"];

function Inspector() {
  return (
    <aside className="flex w-[242px] shrink-0 flex-col border-l border-[#e2e2e2] pl-1 pr-[2px] pt-px">
      <fieldset className="border border-[#dcdcdc] px-[2px] pb-px pt-[2px]">
        <legend className="px-px leading-[8px]">Clip planes</legend>
        <ClipRow label="X" value="48.03 mm" />
        <ClipRow label="Y" value="37.37 mm" />
        <ClipRow label="Z" value="10.47 mm" />
        <ClipRow label="Custom" value="0.00 mm" disabled />
        <div className="flex h-[14px] items-center">
          <label className="flex items-center gap-[2px]">
            <input type="checkbox" className="size-[7px] appearance-none border border-gray-600 bg-white" />
            Transparent cuts
          </label>
          <button type="button" aria-label="Reset clip planes" className="ml-auto">
            <Icon name="back" className="size-[10px]" />
          </button>
          <button type="button" aria-label="Clip plane settings" className="ml-1">
            <Icon name="gear" className="size-3" />
          </button>
        </div>
      </fieldset>
      <div className="mx-auto my-1 w-[14px] border-t border-dotted border-gray-400" />
      <fieldset className="border border-[#dcdcdc] px-[2px] pb-[3px]">
        <legend className="px-px leading-[8px]">Cuts</legend>
        <div className="flex items-center gap-[2px] pt-[2px]">
          <span className="relative flex min-w-0 flex-1">
            <select aria-label="Cuts" className="h-3 w-full appearance-none border border-[#adadad] bg-[#e1e1e1] px-px leading-[10px]">
              <option>&lt;cutting disabled&gt;</option>
            </select>
            <svg viewBox="0 0 6 4" className="pointer-events-none absolute right-[2px] top-1 h-1 w-[6px]">
              <path d="M1 1l2 2 2-2" fill="none" stroke="#444" strokeWidth="0.800" />
            </svg>
          </span>
          <button type="button" aria-label="Add cut">
            <Icon name="addCut" className="size-3" />
          </button>
        </div>
      </fieldset>
      <fieldset className="mt-[5px] border border-[#dcdcdc] px-[2px] pb-px pt-px">
        <legend className="px-px leading-[8px]">Information</legend>
        <div className="grid auto-rows-[16px] grid-cols-[42px_1fr_42px_1fr] items-center">
          <InfoField label="Length" value="0.00 mm" />
          <InfoField label="Volume" value="0.000 cm³" wide />
          <InfoField label="Width" value="0.00 mm" />
          <InfoField label="Area" value="0.000 cm³" wide />
          <InfoField label="Height" value="0.00 mm" />
          <InfoField label="Triangles" value="0" wide />
        </div>
      </fieldset>
      <div className="mt-1 flex flex-1 items-center justify-center border border-l-0 border-white border-b-[#c4c4c4] border-r-[#c4c4c4]">
        0 of 1 part is selected.
      </div>
      <div className="flex h-[26px] items-center gap-[2px] border-b border-[#c4c4c4] pl-px">
        {footerIcons.map((icon) => (
          <button key={icon} type="button" aria-label={icon}>
            <Icon name={icon} className="size-3" />
          </button>
        ))}
      </div>
    </aside>
  );
}

export default function App() {
  return (
    <div className="flex h-screen flex-col overflow-hidden bg-[#f0f0f0] font-[Lato,'Liberation_Sans',sans-serif] text-[6px] leading-[8px] text-black">
      <TitleBar />
      <TabBar />
      <Ribbon />
      <div className="flex min-h-0 flex-1 pt-px">
        <Sidebar />
        <div className="flex w-1 shrink-0 items-center">
          <div className="ml-px h-3 border-l border-dotted border-gray-400" />
        </div>
        <Viewport />
        <Inspector />
      </div>
    </div>
  );
}
